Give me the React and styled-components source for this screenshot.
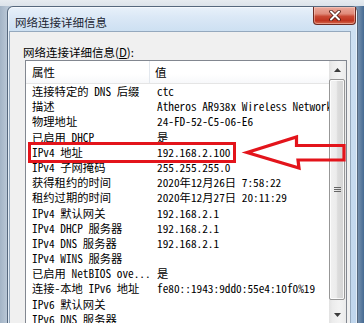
import React from 'react';
import styled, { createGlobalStyle } from 'styled-components';

const GlobalStyle = createGlobalStyle`
  html, body { margin: 0; padding: 0; }
  body { width: 364px; height: 323px; overflow: hidden; background: #b4c3d3; }
  #root { width: 364px; height: 323px; }
`;

const Screen = styled.div`
  position: relative;
  width: 364px;
  height: 323px;
  overflow: hidden;
  box-sizing: border-box;
  padding: 6px 0 0 7px;
  background:
    linear-gradient(180deg, #e6ebf0 0, #dce3ea 6px, transparent 6px),
    linear-gradient(90deg, #a3b4c6 0, #b8c6d5 7px, #7d97b3 357px, #466a92 364px);
`;

const Window = styled.div`
  width: 351px;
  height: 340px;
  box-sizing: border-box;
  border: 1px solid #56687d;
  border-bottom: none;
  border-radius: 6px 6px 0 0;
  background: linear-gradient(180deg, #e8f1fa 0, #dbe8f6 10px, #cde0f2 24px, #bfd5ec 100%);
  box-shadow: inset 0 0 0 1px rgba(255, 255, 255, 0.55);
  display: flex;
  flex-direction: column;
`;

const TitleBar = styled.div`
  height: 24px;
  flex: none;
  display: flex;
  align-items: flex-start;
  justify-content: space-between;
`;

const Title = styled.div`
  font-family: "Noto Sans CJK SC", sans-serif;
  font-size: 11.5px;
  line-height: 14px;
  color: #1c2632;
  padding: 8px 0 0 7px;
`;

const CloseButton = styled.div`
  width: 43px;
  height: 18px;
  margin-right: 1px;
  box-sizing: border-box;
  border: 1px solid #6e2b22;
  border-top: none;
  border-radius: 0 0 4px 4px;
  background: linear-gradient(180deg, #ebaa9c 0, #e08b7a 40%, #c94a35 55%, #c0341f 80%, #d46a4f 100%);
  box-shadow: inset 0 0 0 1px rgba(255, 220, 210, 0.45);
  display: flex;
  align-items: center;
  justify-content: center;
`;

const Client = styled.div`
  flex: 1;
  margin: 0 6px 0 1px;
  border: 1px solid #95a9be;
  border-bottom: none;
  background: #f0f0f0;
  padding: 13px 3px 0 13px;
  display: flex;
  flex-direction: column;
  min-height: 0;
`;

const GroupLabel = styled.div`
  font-family: "Noto Sans CJK SC", sans-serif;
  font-size: 11.5px;
  line-height: 14px;
  height: 14px;
  color: #000;
  margin-bottom: 1px;
  u { text-decoration: underline; text-underline-offset: 1px; }
`;

const ListBox = styled.div`
  margin-left: 2px;
  height: 264px;
  box-sizing: border-box;
  border: 1px solid #828790;
  background: #fff;
  display: flex;
`;

const ListContent = styled.div`
  flex: 1;
  min-width: 0;
  overflow: hidden;
  display: flex;
  flex-direction: column;
`;

const Header = styled.div`
  height: 23px;
  flex: none;
  display: flex;
  background: linear-gradient(180deg, #ffffff 0, #ffffff 60%, #f7f8fa 100%);
  border-bottom: 1px solid #e5e5e5;
  box-sizing: border-box;
`;

const HeaderCell = styled.div`
  width: ${p => p.$w ? `${p.$w}px` : 'auto'};
  flex: ${p => p.$w ? 'none' : '1'};
  box-sizing: border-box;
  padding-left: ${p => p.$pad}px;
  font-family: "Noto Sans CJK SC", sans-serif;
  font-size: 11.5px;
  line-height: 22px;
  color: #000;
  border-right: ${p => p.$w ? '1px solid #e3e8ee' : 'none'};
  white-space: nowrap;
`;

const Row = styled.div`
  height: 15.2px;
  flex: none;
  display: flex;
  font-family: "Noto Sans Mono CJK SC", "Noto Sans CJK SC", monospace;
  font-size: 11.3px;
  line-height: 15.2px;
  color: #000;
`;

const Cell = styled.div`
  width: ${p => p.$w ? `${p.$w}px` : 'auto'};
  flex: ${p => p.$w ? 'none' : '1'};
  box-sizing: border-box;
  padding-left: ${p => p.$pad}px;
  white-space: nowrap;
  overflow: hidden;
`;

const ScrollBar = styled.div`
  width: 17px;
  flex: none;
  display: flex;
  flex-direction: column;
  background: linear-gradient(90deg, #e2e2e2 0, #ececec 20%, #f3f3f3 60%, #ebebeb 100%);
`;

const ScrollButton = styled.div`
  height: 17px;
  flex: none;
  display: flex;
  align-items: center;
  justify-content: center;
`;

const Thumb = styled.div`
  margin: 1px 1px 0 0;
  height: 221px;
  flex: none;
  box-sizing: border-box;
  border: 1px solid #979797;
  border-radius: 2px;
  background: linear-gradient(90deg, #f1f1f1 0, #ececec 45%, #dcdcdc 55%, #d4d4d4 100%);
  box-shadow: inset 0 0 0 1px rgba(255, 255, 255, 0.8);
  display: flex;
  align-items: center;
  justify-content: center;
`;

const Spacer = styled.div`
  flex: 1;
`;

const Overlay = styled.svg`
  position: absolute;
  left: 0;
  top: 0;
  width: 364px;
  height: 323px;
  pointer-events: none;
`;

const rows = [
  ['连接特定的 DNS 后缀', 'ctc'],
  ['描述', 'Atheros AR938x Wireless Network Adapter'],
  ['物理地址', '24-FD-52-C5-06-E6'],
  ['已启用 DHCP', '是'],
  ['IPv4 地址', '192.168.2.100'],
  ['IPv4 子网掩码', '255.255.255.0'],
  ['获得租约的时间', '2020年12月26日 7:58:22'],
  ['租约过期的时间', '2020年12月27日 20:11:29'],
  ['IPv4 默认网关', '192.168.2.1'],
  ['IPv4 DHCP 服务器', '192.168.2.1'],
  ['IPv4 DNS 服务器', '192.168.2.1'],
  ['IPv4 WINS 服务器', ''],
  ['已启用 NetBIOS ove...', '是'],
  ['连接-本地 IPv6 地址', 'fe80::1943:9dd0:55e4:10f0%19'],
  ['IPv6 默认网关', ''],
  ['IPv6 DNS 服务器', ''],
  ['', ''],
];

const COL1 = 124;

export default function App() {
  return (
    <>
      <GlobalStyle />
      <Screen>
        <Window>
          <TitleBar>
            <Title>网络连接详细信息</Title>
            <CloseButton>
              <svg width="12" height="11" viewBox="0 0 12 11">
                <path d="M2 1.5 L10 9.5 M10 1.5 L2 9.5" stroke="#4a1810" strokeWidth="3.6" strokeLinecap="round" />
                <path d="M2 1.5 L10 9.5 M10 1.5 L2 9.5" stroke="#ffffff" strokeWidth="2" strokeLinecap="round" />
              </svg>
            </CloseButton>
          </TitleBar>
          <Client>
            <GroupLabel>网络连接详细信息(<u>D</u>):</GroupLabel>
            <ListBox>
              <ListContent>
                <Header>
                  <HeaderCell $w={COL1} $pad={6}>属性</HeaderCell>
                  <HeaderCell $pad={5}>值</HeaderCell>
                </Header>
                {rows.map(([k, v], i) => (
                  <Row key={i}>
                    <Cell $w={COL1} $pad={6}>{k}</Cell>
                    <Cell $pad={7}>{v}</Cell>
                  </Row>
                ))}
              </ListContent>
              <ScrollBar>
                <ScrollButton>
                  <svg width="7" height="4" viewBox="0 0 7 4"><path d="M0 4 L3.5 0 L7 4 Z" fill="#3c3c3c" /></svg>
                </ScrollButton>
                <Thumb>
                  <svg width="7" height="7" viewBox="0 0 7 7">
                    <path d="M0 1.5 H7 M0 3.5 H7 M0 5.5 H7" stroke="#666" strokeWidth="1" />
                  </svg>
                </Thumb>
                <Spacer />
                <ScrollButton>
                  <svg width="7" height="4" viewBox="0 0 7 4"><path d="M0 0 L3.5 4 L7 0 Z" fill="#3c3c3c" /></svg>
                </ScrollButton>
              </ScrollBar>
            </ListBox>
          </Client>
        </Window>
        <Overlay viewBox="0 0 364 323">
          <rect x="29.5" y="143.5" width="205" height="18" fill="none" stroke="#e3141b" strokeWidth="3" />
          <path
            d="M247 152.5 L296.5 137 L296.5 145.5 L344 145.5 L344 160 L298 160 L299 168 Z"
            fill="none"
            stroke="#e3141b"
            strokeWidth="3.2"
            strokeLinejoin="miter"
          />
        </Overlay>
      </Screen>
    </>
  );
}
